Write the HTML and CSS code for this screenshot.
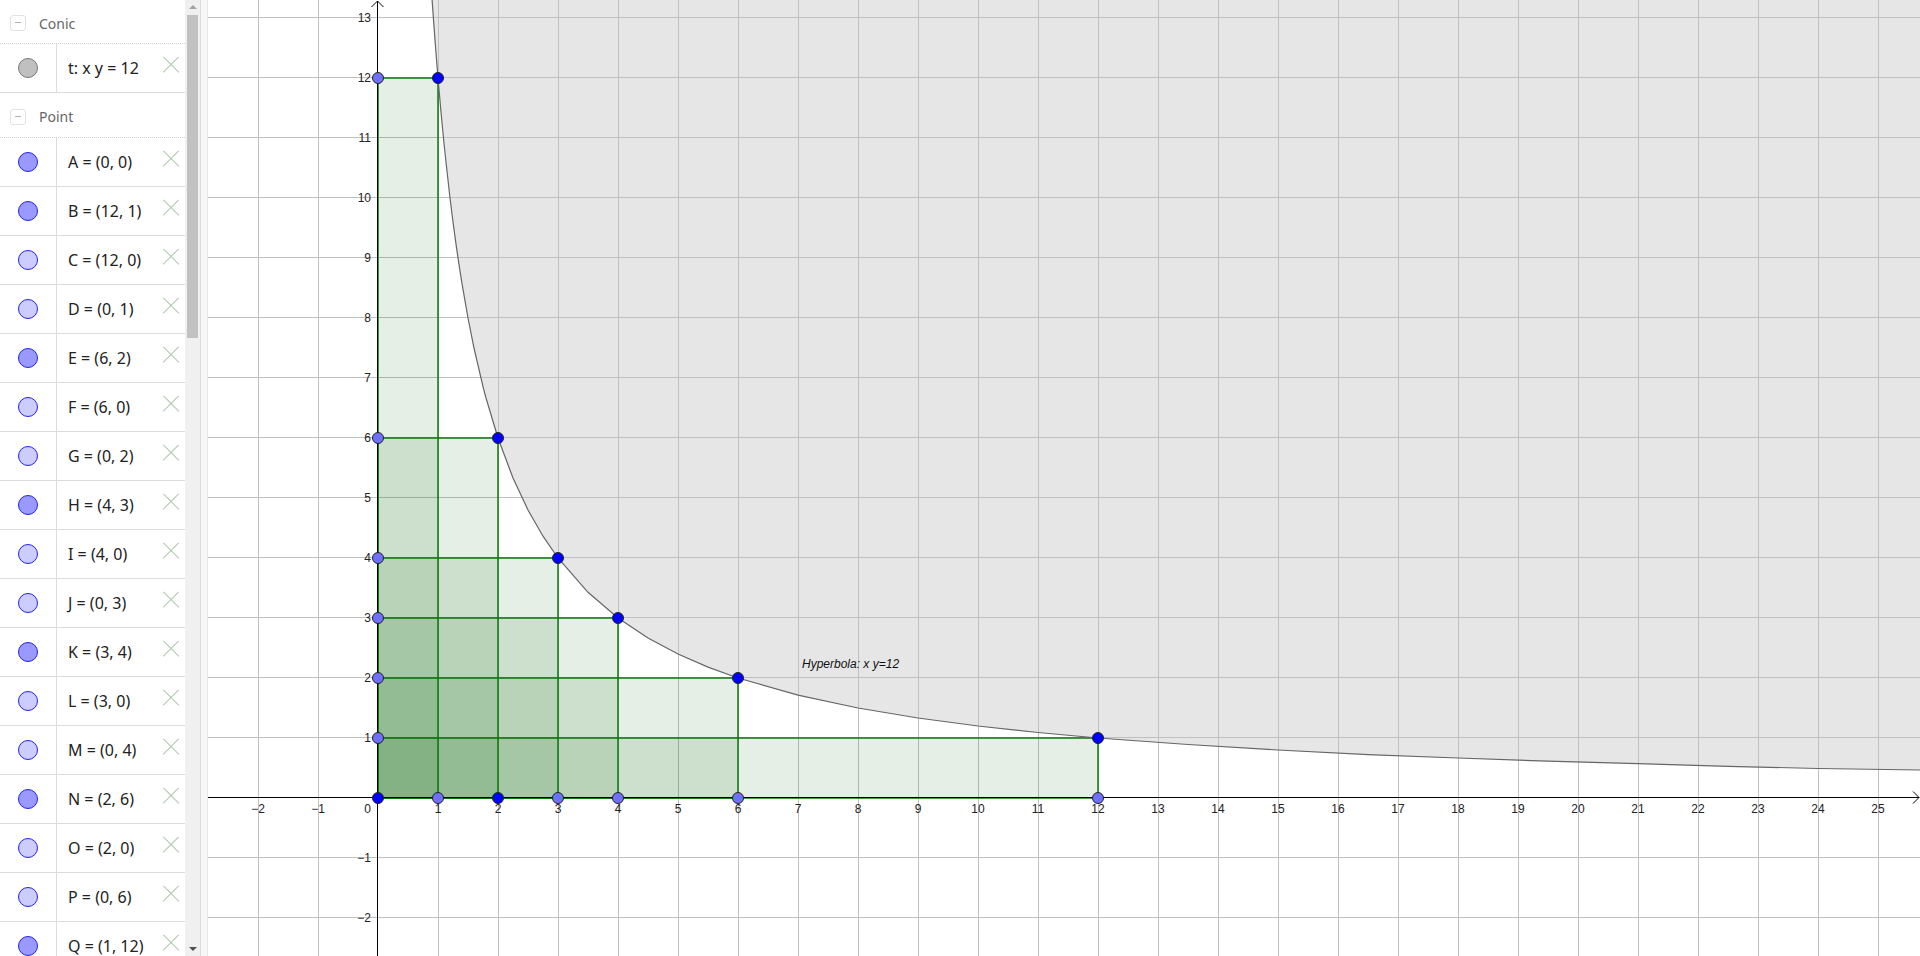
FILE: index.html
```html
<!DOCTYPE html>
<html>
<head>
<meta charset="utf-8">
<link rel="stylesheet" href="styles.css">
</head>
<body>
<div class="app">
  <aside class="algebra">
    <div class="list">
      <div class="group"><span class="collapse"></span><span class="group-name">Conic</span></div>
      <div class="item"><div class="marble-cell"><span class="marble conic"></span></div><div class="def">t: x y = 12</div><span class="del"></span></div>
      <div class="group"><span class="collapse"></span><span class="group-name">Point</span></div>
      <div class="item"><div class="marble-cell"><span class="marble dark"></span></div><div class="def">A = (0, 0)</div><span class="del"></span></div>
      <div class="item"><div class="marble-cell"><span class="marble dark"></span></div><div class="def">B = (12, 1)</div><span class="del"></span></div>
      <div class="item"><div class="marble-cell"><span class="marble light"></span></div><div class="def">C = (12, 0)</div><span class="del"></span></div>
      <div class="item"><div class="marble-cell"><span class="marble light"></span></div><div class="def">D = (0, 1)</div><span class="del"></span></div>
      <div class="item"><div class="marble-cell"><span class="marble dark"></span></div><div class="def">E = (6, 2)</div><span class="del"></span></div>
      <div class="item"><div class="marble-cell"><span class="marble light"></span></div><div class="def">F = (6, 0)</div><span class="del"></span></div>
      <div class="item"><div class="marble-cell"><span class="marble light"></span></div><div class="def">G = (0, 2)</div><span class="del"></span></div>
      <div class="item"><div class="marble-cell"><span class="marble dark"></span></div><div class="def">H = (4, 3)</div><span class="del"></span></div>
      <div class="item"><div class="marble-cell"><span class="marble light"></span></div><div class="def">I = (4, 0)</div><span class="del"></span></div>
      <div class="item"><div class="marble-cell"><span class="marble light"></span></div><div class="def">J = (0, 3)</div><span class="del"></span></div>
      <div class="item"><div class="marble-cell"><span class="marble dark"></span></div><div class="def">K = (3, 4)</div><span class="del"></span></div>
      <div class="item"><div class="marble-cell"><span class="marble light"></span></div><div class="def">L = (3, 0)</div><span class="del"></span></div>
      <div class="item"><div class="marble-cell"><span class="marble light"></span></div><div class="def">M = (0, 4)</div><span class="del"></span></div>
      <div class="item"><div class="marble-cell"><span class="marble dark"></span></div><div class="def">N = (2, 6)</div><span class="del"></span></div>
      <div class="item"><div class="marble-cell"><span class="marble light"></span></div><div class="def">O = (2, 0)</div><span class="del"></span></div>
      <div class="item"><div class="marble-cell"><span class="marble light"></span></div><div class="def">P = (0, 6)</div><span class="del"></span></div>
      <div class="item"><div class="marble-cell"><span class="marble dark"></span></div><div class="def">Q = (1, 12)</div><span class="del"></span></div>
    </div>
    <div class="scrollbar">
      <span class="arrow up"></span>
      <div class="track"><div class="thumb"></div></div>
      <span class="arrow down"></span>
    </div>
  </aside>
  <div class="splitter"></div>
  <main class="graphics">
    <svg class="canvas" width="1712" height="956" viewBox="0 0 1712 956" xmlns="http://www.w3.org/2000/svg">
      <path class="shade" d="M224.1 0 L225.5 19.6 L227 40.1 L228.5 59.5 L230 78 L233 112.3 L236 143.5 L239 171.2 L242 198 L245 222 L248 244.2 L251 264.7 L254 283.7 L260 318 L266 348 L275 386.6 L278 398 L290 438 L305 478 L320 510 L335 536.2 L350 558 L380 592.3 L410 618 L440 638 L470 654 L500 667.1 L530 678 L590 695.1 L650 708 L710 718 L770 726 L830 732.5 L890 738 L980 744.5 L1070 750 L1160 754.7 L1250 758 L1340 761.2 L1430 763.7 L1520 766.3 L1610 768.5 L1712 770 L1712 0 Z"/>
      <path class="grid" d="M50.5 0V956M110.5 0V956M230.5 0V956M290.5 0V956M350.5 0V956M410.5 0V956M470.5 0V956M530.5 0V956M590.5 0V956M650.5 0V956M710.5 0V956M770.5 0V956M830.5 0V956M890.5 0V956M950.5 0V956M1010.5 0V956M1070.5 0V956M1130.5 0V956M1190.5 0V956M1250.5 0V956M1310.5 0V956M1370.5 0V956M1430.5 0V956M1490.5 0V956M1550.5 0V956M1610.5 0V956M1670.5 0V956M0 17.5H1712M0 77.5H1712M0 137.5H1712M0 197.5H1712M0 257.5H1712M0 317.5H1712M0 377.5H1712M0 437.5H1712M0 497.5H1712M0 557.5H1712M0 617.5H1712M0 677.5H1712M0 737.5H1712M0 857.5H1712M0 917.5H1712"/>
      <g class="rects">
        <rect x="170" y="738" width="720" height="60"/>
        <rect x="170" y="678" width="360" height="120"/>
        <rect x="170" y="618" width="240" height="180"/>
        <rect x="170" y="558" width="180" height="240"/>
        <rect x="170" y="438" width="120" height="360"/>
        <rect x="170" y="78" width="60" height="720"/>
      </g>
      <path class="axis" d="M0 797.5H1711M1705 791.5L1711 797.5L1705 803.5M169.5 956V1M163.5 7L169.5 1L175.5 7"/>
      <path class="curve" d="M224.1 0 L225.5 19.6 L227 40.1 L228.5 59.5 L230 78 L233 112.3 L236 143.5 L239 171.2 L242 198 L245 222 L248 244.2 L251 264.7 L254 283.7 L260 318 L266 348 L275 386.6 L278 398 L290 438 L305 478 L320 510 L335 536.2 L350 558 L380 592.3 L410 618 L440 638 L470 654 L500 667.1 L530 678 L590 695.1 L650 708 L710 718 L770 726 L830 732.5 L890 738 L980 744.5 L1070 750 L1160 754.7 L1250 758 L1340 761.2 L1430 763.7 L1520 766.3 L1610 768.5 L1712 770"/>
      <g class="xlabels">
        <text x="50" y="813">−2</text><text x="110" y="813">−1</text>
        <text x="230" y="813">1</text><text x="290" y="813">2</text><text x="350" y="813">3</text><text x="410" y="813">4</text><text x="470" y="813">5</text><text x="530" y="813">6</text><text x="590" y="813">7</text><text x="650" y="813">8</text><text x="710" y="813">9</text><text x="770" y="813">10</text><text x="830" y="813">11</text><text x="890" y="813">12</text><text x="950" y="813">13</text><text x="1010" y="813">14</text><text x="1070" y="813">15</text><text x="1130" y="813">16</text><text x="1190" y="813">17</text><text x="1250" y="813">18</text><text x="1310" y="813">19</text><text x="1370" y="813">20</text><text x="1430" y="813">21</text><text x="1490" y="813">22</text><text x="1550" y="813">23</text><text x="1610" y="813">24</text><text x="1670" y="813">25</text>
      </g>
      <g class="ylabels">
        <text x="163" y="813">0</text>
        <text x="163" y="22">13</text><text x="163" y="82">12</text><text x="163" y="142">11</text><text x="163" y="202">10</text><text x="163" y="262">9</text><text x="163" y="322">8</text><text x="163" y="382">7</text><text x="163" y="442">6</text><text x="163" y="502">5</text><text x="163" y="562">4</text><text x="163" y="622">3</text><text x="163" y="682">2</text><text x="163" y="742">1</text><text x="163" y="862">−1</text><text x="163" y="922">−2</text>
      </g>
      <text class="caption" x="594" y="668">Hyperbola: x y=12</text>
      <g class="pts light">
        <circle cx="890" cy="798" r="5.5"/><circle cx="170" cy="738" r="5.5"/><circle cx="530" cy="798" r="5.5"/><circle cx="170" cy="678" r="5.5"/><circle cx="410" cy="798" r="5.5"/><circle cx="170" cy="618" r="5.5"/><circle cx="350" cy="798" r="5.5"/><circle cx="170" cy="558" r="5.5"/><circle cx="170" cy="438" r="5.5"/><circle cx="230" cy="798" r="5.5"/><circle cx="170" cy="78" r="5.5"/>
      </g>
      <g class="pts dark">
        <circle cx="170" cy="798" r="5.5"/><circle cx="290" cy="798" r="5.5"/><circle cx="890" cy="738" r="5.5"/><circle cx="530" cy="678" r="5.5"/><circle cx="410" cy="618" r="5.5"/><circle cx="350" cy="558" r="5.5"/><circle cx="290" cy="438" r="5.5"/><circle cx="230" cy="78" r="5.5"/>
      </g>
    </svg>
  </main>
</div>
</body>
</html>
```
FILE: styles.css
```css
html, body {
  margin: 0;
  padding: 0;
  width: 1920px;
  height: 956px;
  overflow: hidden;
  background: #fff;
  font-family: "Noto Sans", "Open Sans", "Liberation Sans", sans-serif;
}
.app {
  display: flex;
  width: 1920px;
  height: 956px;
}
.algebra {
  display: flex;
  width: 200px;
  height: 956px;
  flex: none;
  background: #fff;
  overflow: hidden;
}
.list {
  width: 185px;
  flex: none;
}
.group {
  display: flex;
  align-items: center;
  box-sizing: border-box;
  height: 44px;
  padding-top: 3px;
  border-bottom: 1px dotted #d6d6d6;
}
.group + .item + .group {
  height: 45px;
}
.collapse {
  position: relative;
  width: 14px;
  height: 14px;
  margin-left: 10px;
  border: 1px solid #e2e2e2;
  border-radius: 3px;
}
.collapse::after {
  content: "";
  position: absolute;
  left: 4px;
  top: 6px;
  width: 6px;
  height: 1px;
  background: #b0b0b0;
}
.group-name {
  margin-left: 13px;
  font-size: 14px;
  color: #666;
}
.item {
  display: flex;
  height: 48px;
  border-bottom: 1px solid #dcdcdc;
}
.marble-cell {
  width: 56px;
  flex: none;
  display: flex;
  align-items: center;
  justify-content: center;
  border-right: 1px solid #dcdcdc;
}
.marble {
  width: 18px;
  height: 18px;
  border-radius: 50%;
  border: 1px solid #2222ee;
}
.marble.dark { background: #9999ff; }
.marble.light { background: #ccccff; }
.marble.conic { background: #c0c0c0; border-color: #777; }
.def {
  flex: 1;
  display: flex;
  align-items: center;
  padding-left: 11px;
  font-size: 16px;
  color: #222;
  white-space: nowrap;
}
.del {
  position: relative;
  width: 16px;
  height: 16px;
  flex: none;
  margin: 13px 6px 0 0;
}
.del::before, .del::after {
  content: "";
  position: absolute;
  left: -3px;
  top: 7px;
  width: 22px;
  height: 1.4px;
  background: #adc8ad;
  transform: rotate(45deg);
}
.del::after { transform: rotate(-45deg); }
.scrollbar {
  width: 15px;
  flex: none;
  display: flex;
  flex-direction: column;
  background: #f0f0f0;
}
.arrow {
  height: 15px;
  flex: none;
  position: relative;
}
.arrow::after {
  content: "";
  position: absolute;
  left: 4px;
  border-left: 4px solid transparent;
  border-right: 4px solid transparent;
}
.arrow.up::after { top: 5px; border-bottom: 4px solid #a3a3a3; }
.arrow.down::after { top: 6px; border-top: 4px solid #505050; }
.track {
  flex: 1;
  padding: 0 2px;
}
.thumb {
  height: 323px;
  background: #c1c1c1;
}
.splitter {
  width: 6px;
  flex: none;
  background: #f6f6f6;
  border-left: 1px solid #dadada;
  border-right: 1px solid #e6e6e6;
}
.graphics {
  flex: 1;
  height: 956px;
  overflow: hidden;
}
.canvas { display: block; }
.shade { fill: #e6e6e6; }
.grid {
  fill: none;
  stroke: #c0c0c0;
  stroke-width: 1;
  shape-rendering: crispEdges;
}
.rects rect {
  fill: #006400;
  fill-opacity: 0.1;
  stroke: #0a7a0a;
  stroke-width: 1.5;
}
.axis {
  fill: none;
  stroke: #000;
  stroke-width: 1;
}
.curve {
  fill: none;
  stroke: #666;
  stroke-width: 1.2;
}
.xlabels text, .ylabels text {
  font-family: "Liberation Sans", Arial, sans-serif;
  font-size: 12px;
  fill: #222;
}
.xlabels text { text-anchor: middle; }
.ylabels text { text-anchor: end; }
.caption {
  font-family: "Liberation Sans", Arial, sans-serif;
  font-size: 12px;
  font-style: italic;
  fill: #111;
}
.pts circle { stroke: #222; stroke-width: 1; }
.pts.dark circle { fill: #0000ff; }
.pts.light circle { fill: #7070ff; }
```
